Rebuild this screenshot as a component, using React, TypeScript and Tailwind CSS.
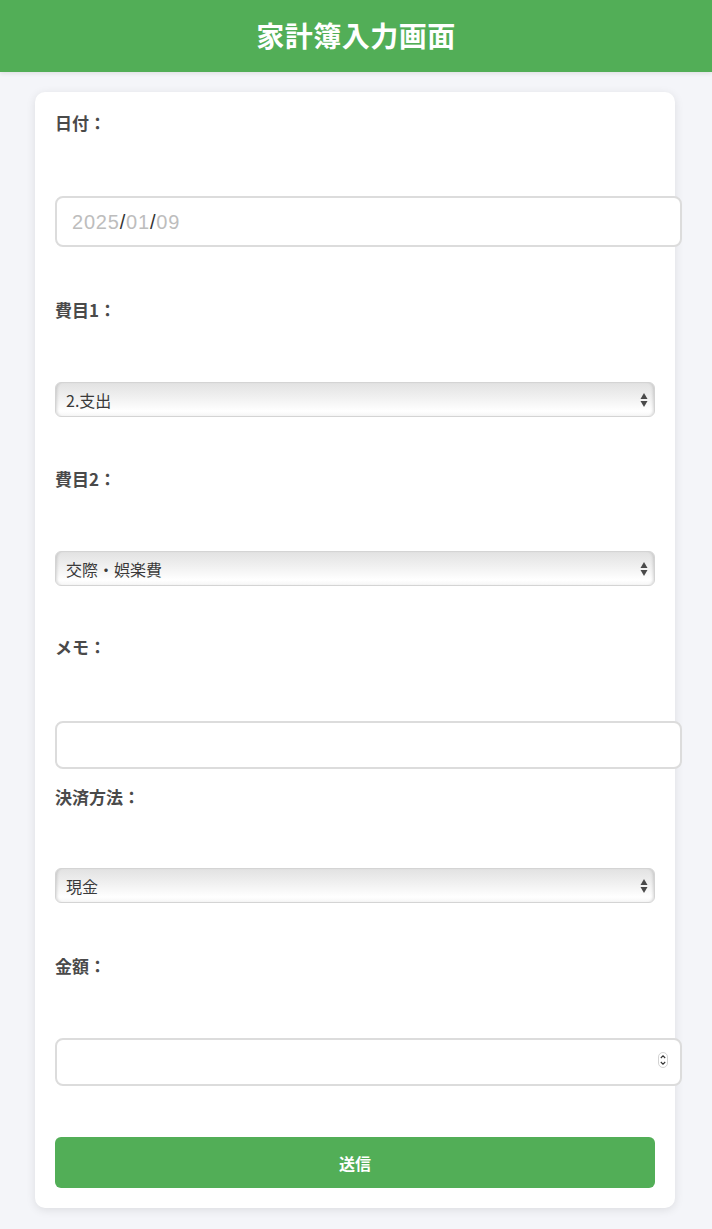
import React from 'react';

const FONT = '"Noto Sans CJK JP", "Liberation Sans", sans-serif';

function Label({ text, className = '' }: { text: string; className?: string }): React.JSX.Element {
  return (
    <label className={`block h-[22px] text-[17px] font-bold leading-[22px] text-[#4a4a4a] ${className}`}>{text}</label>
  );
}

/** macOS 風のグラデーション select */
function AquaSelect({ value, className = '' }: { value: string; className?: string }): React.JSX.Element {
  return (
    <div className={`relative h-[35px] w-[600px] ${className}`}>
      <select
        defaultValue={value}
        className="h-full w-full appearance-none rounded-[6px] border border-[#d4d4d4] bg-[linear-gradient(to_bottom,#e2e2e2_0%,#f1f1f1_45%,#ffffff_85%,#f6f6f6_100%)] pl-[10px] text-[16px] text-[#3a3a3a] shadow-[inset_3px_0_3px_-2px_rgba(0,0,0,0.15),inset_-3px_0_3px_-2px_rgba(0,0,0,0.15)] outline-none"
        style={{ fontFamily: FONT }}
      >
        <option>{value}</option>
      </select>
      <svg className="pointer-events-none absolute right-[7px] top-[10px] h-[16px] w-[8px]" viewBox="0 0 8 16">
        <polygon points="4,1 7.5,7 0.5,7" fill="#4a4a4a" />
        <polygon points="0.5,9 7.5,9 4,15" fill="#4a4a4a" />
      </svg>
    </div>
  );
}

export default function App(): React.JSX.Element {
  return (
    <div className="min-h-[1229px] bg-[#f4f5f9]" style={{ fontFamily: FONT }}>
      {/* ヘッダー */}
      <header className="flex h-[72px] items-center justify-center bg-[#52ae57] shadow-[0_2px_4px_rgba(0,0,0,0.08)]">
        <h1 className="-mt-[2px] text-[28px] font-bold tracking-[0.5px] text-white">家計簿入力画面</h1>
      </header>

      {/* フォームカード */}
      <div className="px-[35px] pt-[20px]">
        <form className="flex w-[640px] flex-col rounded-[10px] bg-white px-[20px] pb-[20px] pt-[20px] shadow-[0_2px_10px_rgba(0,0,0,0.1)]">
          <Label text="日付：" />
          <div
            className="mt-[62px] flex h-[51px] w-[627px] items-center rounded-[8px] border-2 border-[#dcdcdc] bg-white pl-[15px] text-[20px] tracking-[0.8px]"
            style={{ fontFamily: '"Liberation Sans", sans-serif' }}
          >
            <span className="text-[#bdbdbd]">2025</span>
            <span className="text-[#333]">/</span>
            <span className="text-[#bdbdbd]">01</span>
            <span className="text-[#333]">/</span>
            <span className="text-[#bdbdbd]">09</span>
          </div>

          <Label text="費目1：" className="mt-[52px]" />
          <AquaSelect value="2.支出" className="mt-[61px]" />

          <Label text="費目2：" className="mt-[51px]" />
          <AquaSelect value="交際・娯楽費" className="mt-[61px]" />

          <Label text="メモ：" className="mt-[50px]" />
          <input
            type="text"
            className="mt-[63px] h-[48px] w-[627px] rounded-[8px] border-2 border-[#dcdcdc] bg-white px-[15px] text-[16px] outline-none"
          />

          <Label text="決済方法：" className="mt-[17px]" />
          <AquaSelect value="現金" className="mt-[60px]" />

          <Label text="金額：" className="mt-[52px]" />
          <div className="relative mt-[61px] h-[48px] w-[627px]">
            <input
              type="text"
              className="h-full w-full rounded-[8px] border-2 border-[#dcdcdc] bg-white px-[15px] text-[16px] outline-none"
            />
            <svg className="pointer-events-none absolute right-[14px] top-[14px] h-[16px] w-[10px]" viewBox="0 0 10 16">
              <rect x="0.5" y="0.5" width="9" height="15" rx="4.5" fill="#fff" stroke="#c8c8c8" strokeWidth="0.8" />
              <polyline points="2.8,6 5,3.8 7.2,6" fill="none" stroke="#333" strokeWidth="1.1" />
              <polyline points="2.8,10 5,12.2 7.2,10" fill="none" stroke="#333" strokeWidth="1.1" />
            </svg>
          </div>

          <button
            type="button"
            className="mt-[51px] h-[51px] w-[600px] rounded-[6px] bg-[#52ae57] text-[16px] font-bold text-white"
          >
            送信
          </button>
        </form>
      </div>
    </div>
  );
}
